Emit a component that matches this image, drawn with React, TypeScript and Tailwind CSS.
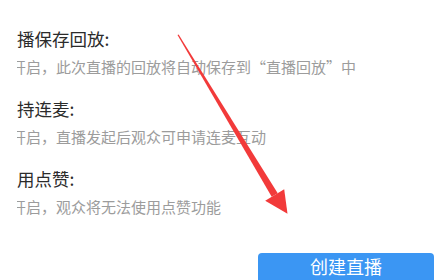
import React from "react";

const font = { fontFamily: '"Noto Sans CJK SC", "Microsoft YaHei", sans-serif' };

const options = [
  { title: "播保存回放:", desc: "开启，此次直播的回放将自动保存到“直播回放”中" },
  { title: "持连麦:", desc: "开启，直播发起后观众可申请连麦互动" },
  { title: "用点赞:", desc: "开启，观众将无法使用点赞功能" },
];

function Arrow() {
  return (
    <svg
      className="absolute inset-0 pointer-events-none"
      width="438"
      height="280"
      viewBox="0 0 438 280"
    >
      <polygon points="177.5,35 178.6,34.6 277.7,193.2 271.7,196.8" fill="#f23a3a" />
      <polygon points="265.2,200.8 287.5,213.8 284.2,189.2" fill="#f23a3a" />
    </svg>
  );
}

export default function App() {
  return (
    <div className="relative w-[438px] h-[280px] overflow-hidden bg-white" style={font}>
      <div className="pl-[17px] pt-[27px]">
        <div className="overflow-hidden flex flex-col gap-[20px]">
          {options.map((o) => (
            <div key={o.title} className="flex flex-col gap-[6px]">
              <div className="text-[17.5px] leading-[24px] text-[#2b2b2b]">{o.title}</div>
              <div className="-ml-[6px] whitespace-nowrap text-[15px] leading-[20px] text-[#9c9c9c]">
                {o.desc}
              </div>
            </div>
          ))}
        </div>
      </div>
      <div className="flex justify-end pr-[4px] mt-[36px]">
        <button className="w-[176px] h-[44px] rounded-[4px] bg-[#3b96f3] text-white text-[18px] leading-[26px] flex items-start justify-center">
          创建直播
        </button>
      </div>
      <Arrow />
    </div>
  );
}
